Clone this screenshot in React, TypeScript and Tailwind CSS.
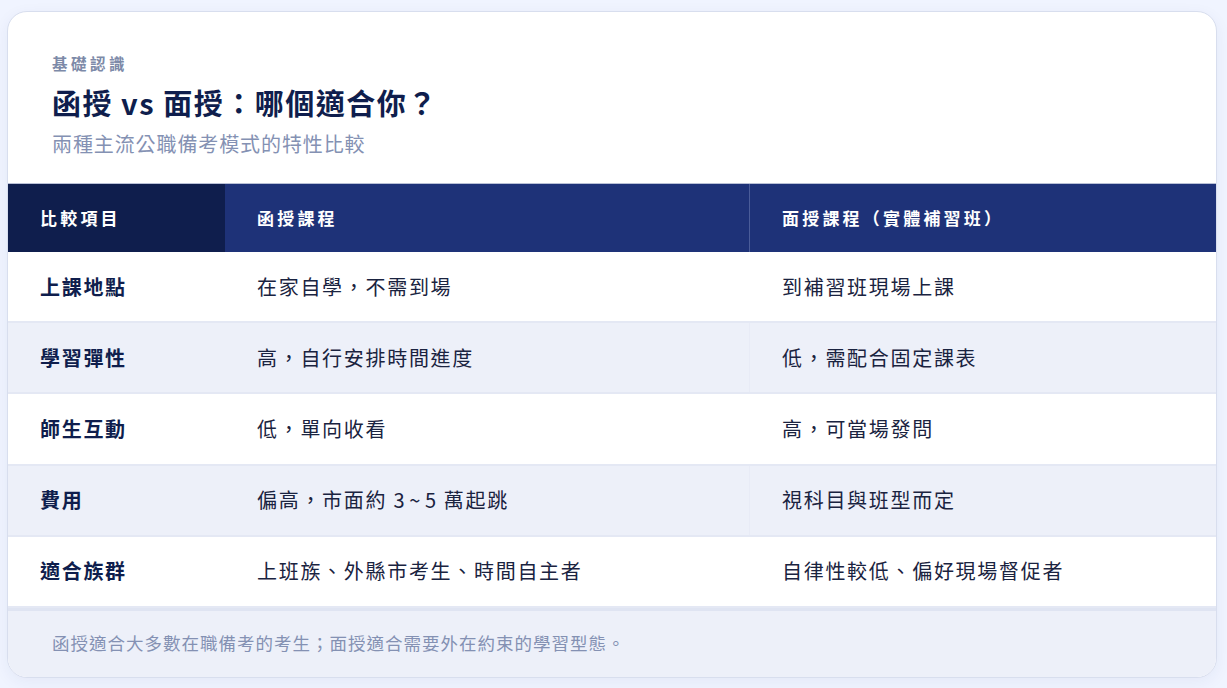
import React from 'react';

const rows = [
  ['上課地點', '在家自學\uFF0C不需到場', '到補習班現場上課'],
  ['學習彈性', '高\uFF0C自行安排時間進度', '低\uFF0C需配合固定課表'],
  ['師生互動', '低\uFF0C單向收看', '高\uFF0C可當場發問'],
  ['費用', '偏高\uFF0C市面約 3\u200A~\u200A5 萬起跳', '視科目與班型而定'],
  ['適合族群', '上班族、外縣市考生、時間自主者', '自律性較低、偏好現場督促者'],
];

const App = () => (
  <div className="h-[688px] bg-[#f0f4ff] pt-[11px] pl-[7px] pr-[10px] font-['Noto_Sans_CJK_TC','Noto_Sans',sans-serif] overflow-hidden">
    <div className="h-[667px] bg-white border border-[#d8deee] rounded-[20px] overflow-hidden shadow-[0_4px_16px_rgba(30,50,120,0.06)] flex flex-col">
      <div className="h-[172px] pl-[44px] pt-[40px] border-b border-[#b9c0d6]">
        <div className="text-[15.5px] leading-[22px] font-bold tracking-[3.5px] text-[#7d8aa8]">基礎認識</div>
        <h1 className="mt-[10px] text-[29px] leading-[36px] font-bold tracking-[1.5px] text-[#0f1e4d]">{'函授 vs 面授\uFF1A哪個適合你\uFF1F'}</h1>
        <p className="mt-[10px] text-[20px] leading-[28px] tracking-[0.9px] text-[#8491b3]">兩種主流公職備考模式的特性比較</p>
      </div>
      <div className="grid grid-cols-[217px_525px_1fr] h-[68px] text-white text-[17px] font-bold tracking-[3.2px] items-stretch">
        <div className="bg-[#0f1e4d] pl-[32px] flex items-center">比較項目</div>
        <div className="bg-[#1e3278] pl-[32px] flex items-center border-r border-[#4a5c99]">函授課程</div>
        <div className="bg-[#1e3278] pl-[32px] flex items-center">{'面授課程\uFF08實體補習班\uFF09'}</div>
      </div>
      {rows.map((row, i) => (
        <div
          key={row[0]}
          className={`grid grid-cols-[217px_525px_1fr] h-[71.2px] border-b-2 border-[#e4e8f4] items-stretch text-[20px] tracking-[1.7px] ${i % 2 === 1 ? 'bg-[#edf0f9]' : 'bg-white'}`}
        >
          <div className="pl-[32px] flex items-center font-bold text-[#0f1e4d]">{row[0]}</div>
          <div className={`pl-[32px] flex items-center text-[#1a2340] border-r ${i % 2 === 1 ? 'border-[#e8ebf6]' : 'border-white'}`}>{row[1]}</div>
          <div className="pl-[32px] flex items-center text-[#1a2340]">{row[2]}</div>
        </div>
      ))}
      <div className="flex-1 bg-[#edf0f9] border-t-[3px] border-[#dfe4f2] pl-[44px] pb-[2px] flex items-center text-[17.5px] tracking-[1px] text-[#8491b3]">
        {'函授適合大多數在職備考的考生\uFF1B面授適合需要外在約束的學習型態。'}
      </div>
    </div>
  </div>
);

export default App;
